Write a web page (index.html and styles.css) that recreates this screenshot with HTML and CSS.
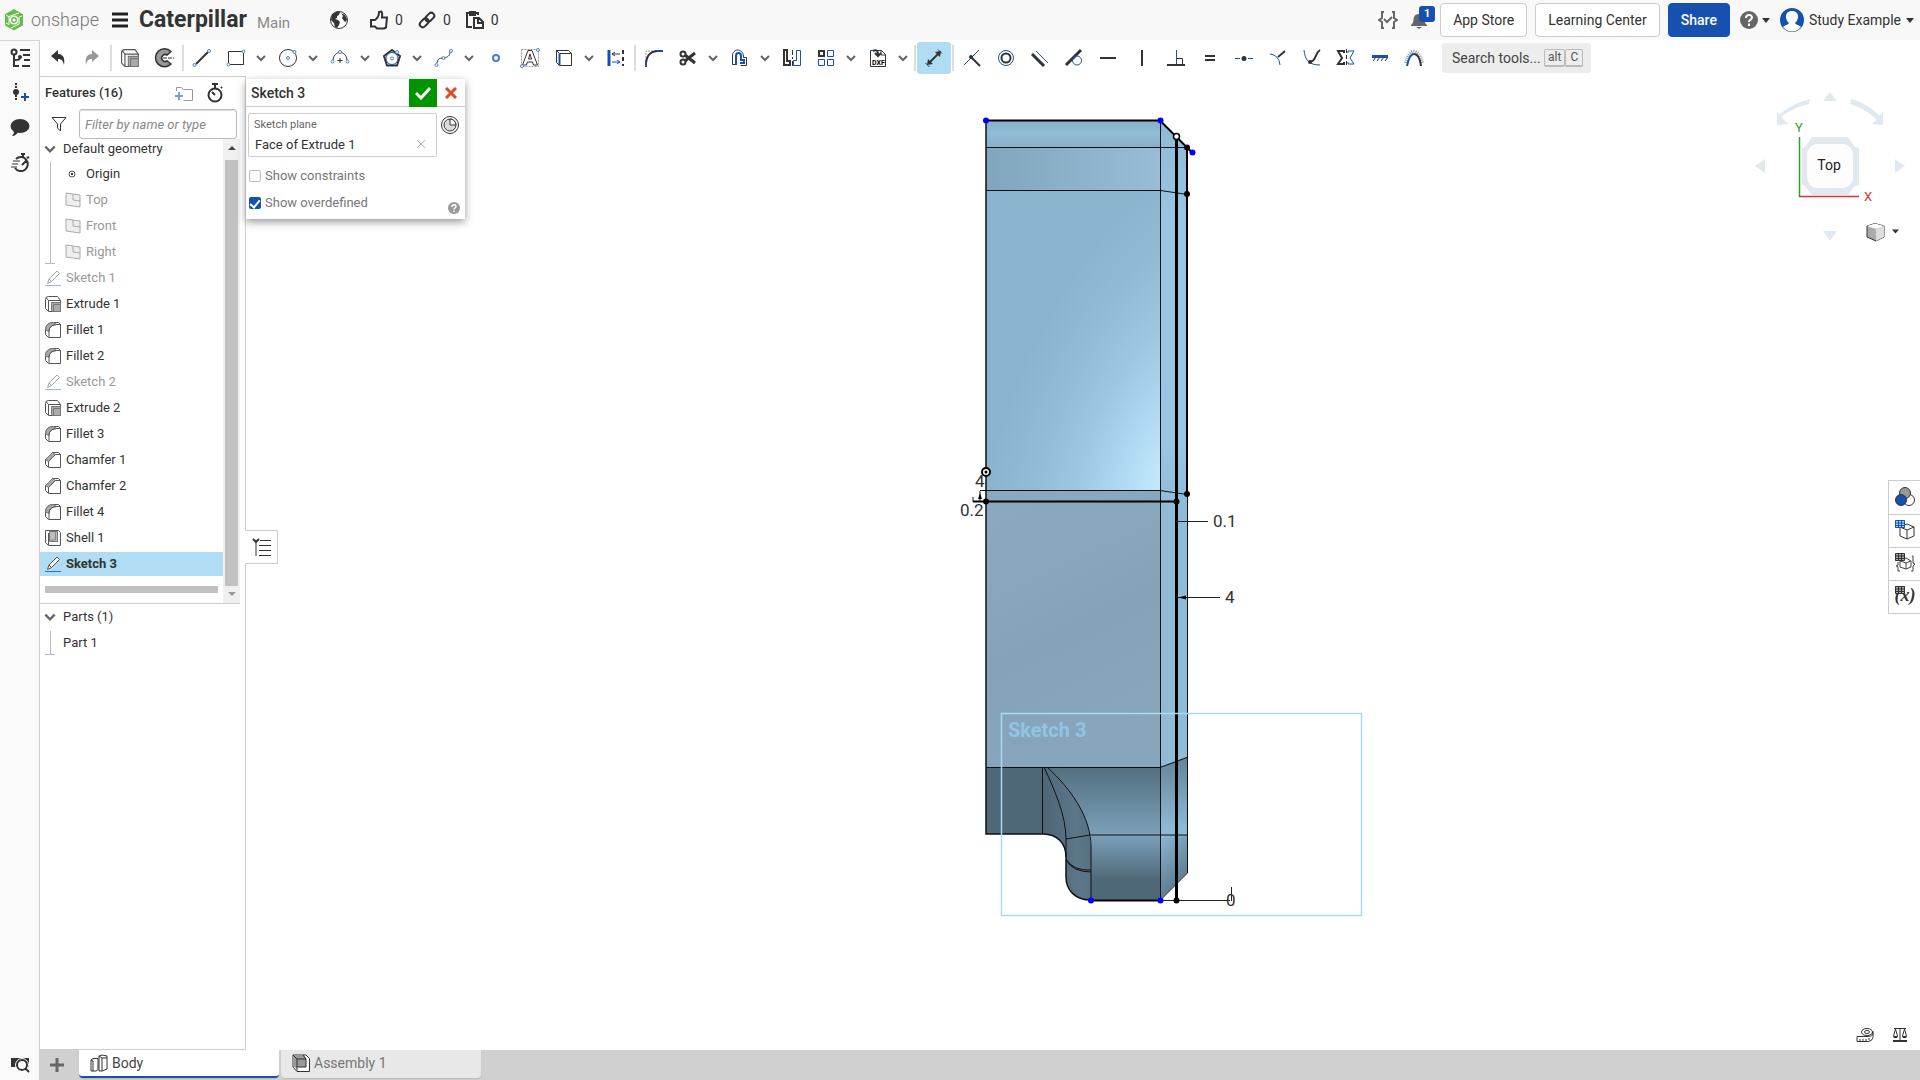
FILE: index.html
```html
<!DOCTYPE html>
<html lang="en">
<head>
<meta charset="utf-8">
<title>Caterpillar | Body</title>
<link rel="stylesheet" href="styles.css">
</head>
<body>
<svg class="defs" aria-hidden="true">
  <symbol id="caret" viewBox="0 0 12 12"><path d="M2 4l4 4 4-4" fill="none" stroke="#666" stroke-width="2"/></symbol>
  <symbol id="down" viewBox="0 0 8 5"><path d="M0 0h8L4 5z" fill="#333"/></symbol>
  <symbol id="plane" viewBox="0 0 16 16"><path d="M1 1l14 2v12L1 13z" fill="#eee" stroke="#aaa"/><path d="M8 2v6l7 1" fill="none" stroke="#aaa"/></symbol>
  <symbol id="pencil" viewBox="0 0 16 16"><path d="M2.500 13.500l1.500-4.500 8-8 2.500 2.500-8 8zM4 9l2.500 2.500" fill="#fff" stroke="#555"/><path d="M0 15.500h16" stroke="#2f6fd0"/></symbol>
  <symbol id="extrude" viewBox="0 0 16 16"><path d="M.5 3.500v9l3 3h12v-11l-3-4h-9q-3 0-3 3z" fill="#fff" stroke="#555"/><path d="M3.500 15V4.500h12M1 1.500l2.500 3" fill="none" stroke="#555"/><path d="M6.500 6.500h9v9h-8l-1-1z" fill="#aaa" stroke="#777"/><path d="M8.500 15V8.500h7" fill="none" stroke="#777"/></symbol>
  <symbol id="fillet" viewBox="0 0 16 16"><path d="M.5 7.500Q1 .5 8.500.5h5l2 2v13h-12l-3-3z" fill="#fff" stroke="#555"/><path d="M.5 8Q1 .5 8.500.5l3 2Q4 3 4 9.500z" fill="#aaa" stroke="#777"/><path d="M4 15V9.500Q4 3 11.500 2.500h4" fill="none" stroke="#555"/></symbol>
  <symbol id="chamfer" viewBox="0 0 16 16"><path d="M.5 7.500L7.500.5h6l2 2v13h-12l-3-3z" fill="#fff" stroke="#555"/><path d="M.5 7.500L7.500.5l3 2L3.500 9.500z" fill="#aaa" stroke="#777"/><path d="M3.500 15V9.500l7-7h5" fill="none" stroke="#555"/></symbol>
  <symbol id="hollow" viewBox="0 0 16 16"><path d="M.5.5h13l2 2v13h-12l-3-3zM3.500 3v12" fill="#fff" stroke="#555"/><path d="M4.500 1.500h8v10h-8z" fill="#bbb" stroke="#777"/><path d="M10.500 2v8h-6" fill="none" stroke="#888"/></symbol>
  <symbol id="grid" viewBox="0 0 10 8"><path d="M.5.5h9v7h-9zM.5 3h9M.5 5.500h9M3.500 1v6M6.500 1v6" stroke="currentColor" fill="none"/></symbol>
</svg>

<header class="topbar">
  <a class="logo" href="#">
    <svg width="20" height="24" viewBox="0 0 20 24"><path d="M10 1l9 5.300v11L10 22.500 1 17.500V6.300z" fill="#66bd4f"/><path d="M2 15l3 1.700V8.500L15 5M18 8l-3 1v7l-8 4M5 9L2 7" fill="none" stroke="#f8f8f8"/><circle cx="10" cy="12" r="4.600" fill="#f8f8f8"/><circle cx="10" cy="12" r="3" fill="#66bd4f"/><circle cx="10" cy="12" r="1.600" fill="#f8f8f8"/></svg>
    <span>onshape</span>
  </a>
  <button class="bare menu" aria-label="Menu"><svg width="16" height="16"><path d="M0 2h16M0 8h16M0 14h16" stroke="#222" stroke-width="3"/></svg></button>
  <h1>Caterpillar</h1>
  <span class="branch">Main</span>
  <div class="counts">
    <svg class="globe" width="20" height="20"><circle cx="10" cy="10" r="8.500" fill="#fff" stroke="#333"/><path d="M3 4l5-2.500 3 .5-1 3-2 1v2L6 9l3 1 2 2-1 3-2 3-2-1-1-4-3-3zM12 3l4 2 2 4-1 3-2-1-2-3 1-2z" fill="#333"/></svg>
    <span><svg width="20" height="20" fill="none" stroke="#333" stroke-width="2"><path d="M2 10h4c3-2 4-4 4-8l2-.5c2 1 1 4 1 6h5l-1 10-2 1H8l-2-2H2z"/></svg>0</span>
    <span><svg width="20" height="20" viewBox="0 0 20 20" fill="none" stroke="#333" stroke-width="2"><g transform="rotate(-45 10 10)"><rect x="1" y="7" width="10" height="6" rx="3"/><rect x="9" y="7" width="10" height="6" rx="3"/></g></svg>0</span>
    <span><svg width="20" height="20" fill="none" stroke="#333" stroke-width="2"><path d="M7 17H2V3h11v2M5 2v3h5V2z"/><path d="M9 8h5l4 4v6H9zM13 8v5h5"/></svg>0</span>
  </div>
  <div class="account">
    <button class="bare" aria-label="Tasks"><svg width="20" height="20" fill="none" stroke="#666" stroke-width="2"><path d="M6 2H4v6l-3 2 3 2v6h2M14 2h2v6l3 2-3 2v6h-2M6 9l3 3 5-5"/></svg></button>
    <button class="bare bell" aria-label="Notifications"><svg width="18" height="20"><path d="M1 15c3-2 2-5 3-8 1-4 9-4 10 0 1 3 0 6 3 8v1H1zM6 17h6l-3 2z" fill="#666"/></svg><b>1</b></button>
    <button class="btn">App Store</button>
    <button class="btn">Learning Center</button>
    <button class="btn share">Share</button>
    <button class="bare help" aria-label="Help"><svg width="18" height="18"><circle cx="9" cy="9" r="9" fill="#666"/><path d="M6 7c0-4 6-4 6-.5C12 8.500 9 8.500 9 11M9 12.500V15" stroke="#fff" stroke-width="2" fill="none"/></svg><svg width="8" height="5"><use href="#down"/></svg></button>
    <button class="bare user"><svg width="24" height="24"><circle cx="12" cy="12" r="12" fill="#1651b0"/><path d="M12 3c8 0 7 9 3 12 1 2 4 2 6 4-5 6-13 6-18 0 2-2 5-2 6-4C5 12 4 3 12 3z" fill="#fff"/></svg>Study Example<svg width="8" height="5"><use href="#down"/></svg></button>
  </div>
</header>

<div class="shell">
  <nav class="rail" aria-label="Document panels">
    <button class="bare" aria-label="Feature tree"><svg width="20" height="20" fill="none" stroke="#333" stroke-width="2"><circle cx="4" cy="4" r="2.500"/><path d="M4 7v11h5M4 12c5 0 6 0 6-3M10 2h10M13 7h7M14 12h6M12 18h8"/><circle cx="10" cy="9" r="1"/></svg></button>
    <button class="bare" aria-label="Insert"><svg width="20" height="20"><circle cx="6" cy="9" r="3" fill="#333"/><path d="M6 0v6M6 12v6" stroke="#333" stroke-width="2" stroke-dasharray="2 1"/><path d="M11 14h8M15 10v8" stroke="#1651b0" stroke-width="2"/></svg></button>
    <button class="bare" aria-label="Comments"><svg width="20" height="20"><ellipse cx="10" cy="8" rx="9.500" ry="7" fill="#333"/><path d="M3 12l1 3-2 3c3 0 5-2 6-4z" fill="#333"/></svg></button>
    <button class="bare" aria-label="History"><svg width="20" height="20" fill="none" stroke="#333" stroke-width="2"><path d="M6 6a7 7 0 1 1-1 9M11 1h4M13 1v3M17 5l2-1M12 12l4-4"/><path d="M3 8h7M2 11h6M1 14h6" stroke-width="1"/></svg></button>
    <button class="bare last" aria-label="Search document"><svg width="20" height="20"><path d="M1 3h18v9H1z" fill="#333"/><circle cx="12" cy="10" r="5" fill="#fafafa" stroke="#333" stroke-width="2"/><circle cx="12" cy="10" r="6.500" fill="none" stroke="#fafafa"/><path d="M15 13l4 4" stroke="#333" stroke-width="2"/></svg></button>
  </nav>

  <div class="work">
    <div class="toolbar" role="toolbar" aria-label="Sketch tools">
      <button class="tool" aria-label="Undo"><svg><path d="M3 8l7-6v4c6 0 7 5 6 11-1-4-2-6-6-6v3z" fill="#333"/></svg></button>
      <button class="tool" aria-label="Redo"><svg><path d="M17 8l-7-6v4c-6 0-7 5-6 11 1-4 2-6 6-6v3z" fill="#999"/></svg></button>
      <i class="sep"></i>
      <button class="tool" aria-label="Extrude"><svg><use href="#extrude" x="1" y="1" width="18" height="18"/></svg></button>
      <button class="tool" aria-label="Revolve"><svg><path d="M17 3.500A9 9 0 1 0 17 16l-4-3a3.500 3.500 0 1 1 0-6z" fill="#999" stroke="#333" stroke-width="1.500"/><path d="M9 10h11" stroke="#333" stroke-dasharray="4 1"/></svg></button>
      <i class="sep"></i>
      <button class="tool" aria-label="Line"><svg><path d="M4 16L16 4" class="k w"/><circle class="n" cx="2.500" cy="17" r="1.500"/><circle class="n" cx="17" cy="3" r="1.500"/></svg></button>
      <button class="tool" aria-label="Rectangle"><svg><path d="M2.500 3.500h15v13h-15z" class="k"/><circle class="n" cx="2.500" cy="16.500" r="1.500"/><circle class="n" cx="17.500" cy="3.500" r="1.500"/></svg></button><button class="drop" aria-label="Rectangle options"><svg><use href="#caret"/></svg></button>
      <button class="tool" aria-label="Circle"><svg><circle cx="10" cy="10" r="8.500" class="k"/><circle class="n" cx="10" cy="10" r="1.500"/><circle class="n" cx="16.500" cy="4" r="1.500"/></svg></button><button class="drop" aria-label="Circle options"><svg><use href="#caret"/></svg></button>
      <button class="tool" aria-label="Arc"><svg><path d="M3 12C4 2 16 2 17 12" class="k"/><path d="M10 10v5M7.500 12.500h5" class="k"/><circle class="n" cx="2.500" cy="13.500" r="1.500"/><circle class="n" cx="17.500" cy="13.500" r="1.500"/><circle class="n" cx="10" cy="4" r="1.500"/></svg></button><button class="drop" aria-label="Arc options"><svg><use href="#caret"/></svg></button>
      <button class="tool" aria-label="Polygon"><svg><path d="M10 2l8 6-3 9.500H5L2 8z" class="k w"/><circle class="b" cx="10" cy="10.500" r="6"/><circle class="n" cx="10" cy="10.500" r="1.500"/><circle class="n" cx="15" cy="4" r="1.500"/></svg></button><button class="drop" aria-label="Polygon options"><svg><use href="#caret"/></svg></button>
      <button class="tool" aria-label="Spline"><svg><path d="M3 15c1-7 6-4 8-5s5-2 5-6" class="k"/><circle class="n" cx="2.500" cy="17" r="1.500"/><circle class="n" cx="9.500" cy="10" r="1.500"/><circle class="n" cx="17" cy="3" r="1.500"/></svg></button><button class="drop" aria-label="Spline options"><svg><use href="#caret"/></svg></button>
      <button class="tool" aria-label="Point"><svg><circle class="n" stroke-width="2" cx="10" cy="10" r="3"/></svg></button>
      <button class="tool" aria-label="Text"><svg><path d="M1.500 1.500h17v17h-17z" class="g" stroke-dasharray="2 1"/><path d="M2.500 17L8 2.500h4L17.500 17h-4l-1-3h-5l-1 3zM8.500 11h3L10 6z" fill="#fff" stroke="#333"/><circle class="n" cx="2" cy="18" r="1.500"/><circle class="n" cx="18" cy="2" r="1.500"/></svg></button>
      <button class="tool" aria-label="Use"><svg><path d="M2.500 2.500h12l3 3v12h-12l-3-3zM2.500 2.500l3 3h12" class="k"/><path d="M5.500 5.500v12" class="b w"/></svg></button><button class="drop" aria-label="Use options"><svg><use href="#caret"/></svg></button>
      <button class="tool" aria-label="Construction"><svg><path d="M3 2v16" class="b w3"/><path d="M17 2v16" class="k w" stroke-dasharray="4 3"/><path d="M14 6H6l3-2M6 6l3 2" class="k"/><path d="M6 14h8l-3-2M14 14l-3 2" class="b"/></svg></button>
      <i class="sep"></i>
      <button class="tool" aria-label="Sketch fillet"><svg><path d="M2 13V3h10" class="g" stroke-dasharray="2 1"/><path d="M2 15C3 7 6 4 13 3" class="k w"/><path d="M2 14v5M13 3h6" class="b w"/></svg></button>
      <button class="tool" aria-label="Trim"><svg><circle cx="5" cy="6" r="2.500" class="k w"/><circle cx="5" cy="14" r="2.500" class="k w"/><path d="M7 7l10 8M7 13l10-8" class="k w3"/></svg></button><button class="drop" aria-label="Trim options"><svg><use href="#caret"/></svg></button>
      <button class="tool" aria-label="Offset"><svg><path d="M2.500 16.500V8c0-8 10-8 11 0v1.500h3v8h-6M2.500 16.500H5" class="k"/><path d="M6 17V8c0-4 5-4 5 0v4h3v3h-4" class="b w"/></svg></button><button class="drop" aria-label="Offset options"><svg><use href="#caret"/></svg></button>
      <button class="tool" aria-label="Mirror"><svg><path d="M2 2h3v11h3v4H2z" class="k w"/><path d="M18.500 2.500h-4v10h-3v5h7z" class="b"/><path d="M10.500 2v16" class="k" stroke-dasharray="5 2 2 2"/></svg></button>
      <button class="tool" aria-label="Pattern"><svg><path d="M3 3h5v5H3z" class="k w"/><path d="M11.500 2.500h6v6h-6zM2.500 11.500h6v6h-6zM11.500 11.500h6v6h-6z" class="b"/></svg></button><button class="drop" aria-label="Pattern options"><svg><use href="#caret"/></svg></button>
      <button class="tool" aria-label="Insert DXF"><svg><path d="M2.500 18.500v-16h11l4 4v12zM13 2v5h5" class="k"/><path d="M5 3c4-2 5 0 5 4M7 5l3 3 3-3" class="k w"/><text x="4" y="17" class="dxf">DXF</text></svg></button><button class="drop" aria-label="Insert options"><svg><use href="#caret"/></svg></button>
      <i class="sep"></i>
      <button class="tool on" aria-label="Dimension" aria-pressed="true"><svg><path d="M6 14l8-8" class="k w"/><path d="M3 17l1-6 5 5zM17 3l-1 6-5-5z" fill="#333"/><path d="M1.500 15l4 4M14 1.500l4 4" class="k"/></svg></button>
      <i class="sep"></i>
      <button class="tool" aria-label="Coincident"><svg><path d="M2 17L17 2" class="b"/><path d="M9 9l9 9" class="k w"/><circle cx="9" cy="9" r="2" fill="#333"/></svg></button>
      <button class="tool" aria-label="Concentric"><svg><circle cx="10" cy="10" r="7.500" class="b"/><circle cx="10" cy="10" r="4.500" class="k w"/></svg></button>
      <button class="tool" aria-label="Parallel"><svg><path d="M2 6l12 12" class="k w3"/><path d="M6 3l12 12" class="b"/></svg></button>
      <button class="tool" aria-label="Tangent"><svg><path d="M2 17L17 2" class="k w3"/><circle cx="13" cy="12.500" r="4.500" class="b"/></svg></button>
      <button class="tool" aria-label="Horizontal"><svg><path d="M2 10h16" class="k w"/></svg></button>
      <button class="tool" aria-label="Vertical"><svg><path d="M10 2v16" class="k w"/></svg></button>
      <button class="tool" aria-label="Perpendicular"><svg><path d="M10.500 2v15" class="b"/><path d="M1 17h18" class="k w"/><path d="M10.500 10.500h6V17" class="k"/></svg></button>
      <button class="tool" aria-label="Equal"><svg><path d="M5 8h10M5 12h10" class="k w"/></svg></button>
      <button class="tool" aria-label="Midpoint"><svg><path d="M1 10.500h5M14 10.500h5" class="b"/><circle cx="10" cy="10.500" r="2.500" fill="#333"/></svg></button>
      <button class="tool" aria-label="Normal"><svg><path d="M2 6q9 1 10 11" class="b"/><path d="M10 9l7-6" class="k w"/></svg></button>
      <button class="tool" aria-label="Pierce"><svg><path d="M2 2c1 10 5 15 16 15" class="b"/><path d="M8 14c7-1 4-8 10-12" class="k w"/><circle cx="8" cy="14" r="2" fill="#333"/></svg></button>
      <button class="tool" aria-label="Symmetric"><svg><path d="M8 5V3H2l4 7-4 6h6v-2" class="k w"/><path d="M12 5V3h6l-4 7 4 6h-6v-2" class="b"/><path d="M10.500 1v18" class="k" stroke-dasharray="4 2"/></svg></button>
      <button class="tool" aria-label="Fix"><svg><path d="M2 8.500h16" class="b w3"/><path d="M3 13l3-4M7 13l3-4M11 13l3-4M15 13l3-4" class="k"/></svg></button>
      <button class="tool" aria-label="Curvature"><svg><path d="M2 15C6 0 14 0 18 15" class="g" stroke-width="4" stroke-dasharray="1 1"/><path d="M3 18C5 8 8 6 10 6" class="b w"/><path d="M10 6c3 0 6 4 7 12" class="k w"/></svg></button>
      <button class="search">Search tools... <kbd>alt</kbd><kbd>C</kbd></button>
    </div>

    <div class="stage">
      <aside class="features">
        <div class="head"><h2>Features (16)</h2>
          <button class="bare" aria-label="Add folder"><svg width="20" height="18"><path d="M2.500 7V3.500h5l2 2h9v11h-9" fill="none" stroke="#999"/><path d="M1 12h8M5 8v8" stroke="#78a0dc" stroke-width="2"/></svg></button>
          <button class="bare" aria-label="Rebuild times"><svg width="18" height="20" fill="none" stroke="#333" stroke-width="2"><circle cx="9" cy="12" r="6.500"/><path d="M6 1h6M9 1v4M15 5l1-1M9 12L6 9"/></svg></button>
        </div>
        <div class="filter"><svg width="16" height="16"><path d="M1 1.500h14L9.500 8v7L6.500 12V8z" fill="none" stroke="#333"/></svg><input type="text" aria-label="Filter features" placeholder="Filter by name or type"></div>
        <div class="tree">
          <ul>
            <li class="group first"><svg><use href="#caret"/></svg>Default geometry</li>
            <li class="nest"><ul>
              <li><svg><circle cx="7" cy="8" r="3" fill="none" stroke="#555"/><circle cx="7" cy="8" r="1"/></svg>Origin</li>
              <li class="off"><svg><use href="#plane"/></svg>Top</li>
              <li class="off"><svg><use href="#plane"/></svg>Front</li>
              <li class="off"><svg><use href="#plane"/></svg>Right</li>
            </ul></li>
            <li class="off dim"><svg><use href="#pencil"/></svg>Sketch 1</li>
            <li><svg><use href="#extrude"/></svg>Extrude 1</li>
            <li><svg><use href="#fillet"/></svg>Fillet 1</li>
            <li><svg><use href="#fillet"/></svg>Fillet 2</li>
            <li class="off dim"><svg><use href="#pencil"/></svg>Sketch 2</li>
            <li><svg><use href="#extrude"/></svg>Extrude 2</li>
            <li><svg><use href="#fillet"/></svg>Fillet 3</li>
            <li><svg><use href="#chamfer"/></svg>Chamfer 1</li>
            <li><svg><use href="#chamfer"/></svg>Chamfer 2</li>
            <li><svg><use href="#fillet"/></svg>Fillet 4</li>
            <li><svg><use href="#hollow"/></svg>Shell 1</li>
            <li class="current"><svg><use href="#pencil"/></svg>Sketch 3</li>
            <li class="rollback"></li>
          </ul>
          <div class="scroll"><svg width="8" height="4"><path d="M0 4h8L4 0z" fill="#444"/></svg><i></i><svg width="8" height="4"><path d="M0 0h8L4 4z" fill="#999"/></svg></div>
        </div>
        <ul class="parts">
          <li class="group"><svg><use href="#caret"/></svg>Parts (1)</li>
          <li class="nest"><ul><li class="part">Part 1</li></ul></li>
        </ul>
      </aside>

      <main class="canvas">
        <svg class="model" viewBox="246 76 1674 974" aria-label="Caterpillar model, top view">
          <defs>
            <radialGradient id="face" gradientUnits="userSpaceOnUse" cx="1170" cy="480" r="360" gradientTransform="translate(1170 480) rotate(18) scale(.5 1) translate(-1170 -480)"><stop offset="0" stop-color="#c6edff"/><stop offset=".25" stop-color="#b0daf3"/><stop offset=".5" stop-color="#9bc7e1"/><stop offset=".75" stop-color="#90bbd5"/><stop offset="1" stop-color="#8ab4ce"/></radialGradient>
            <linearGradient id="band"><stop offset="0" stop-color="#81a5bd"/><stop offset="1" stop-color="#9abdd7"/></linearGradient>
            <linearGradient id="cap" x2="0" y2="1"><stop offset="0" stop-color="#86b1ca"/><stop offset=".5" stop-color="#8fbdd6"/><stop offset="1" stop-color="#88b0ca"/></linearGradient>
            <linearGradient id="low" x2=".3" y2="1"><stop offset="0" stop-color="#8baac0"/><stop offset=".6" stop-color="#85a3b8"/><stop offset="1" stop-color="#88a6bb"/></linearGradient>
            <linearGradient id="side" x2="0" y2="1"><stop offset="0" stop-color="#8fbad5"/><stop offset=".15" stop-color="#98c6e2"/><stop offset=".5" stop-color="#98c6e2"/><stop offset=".6" stop-color="#8fbbd7"/><stop offset="1" stop-color="#8fbbd7"/></linearGradient>
            <linearGradient id="hip" x2="0" y2="1"><stop offset="0" stop-color="#536f80"/><stop offset="1" stop-color="#7aa0b8"/></linearGradient>
            <linearGradient id="foot" x2="0" y2="1"><stop offset="0" stop-color="#7aa0b8"/><stop offset=".7" stop-color="#4f6878"/><stop offset="1" stop-color="#4f6878"/></linearGradient>
            <linearGradient id="hipside" x2="0" y2="1"><stop offset="0" stop-color="#658395"/><stop offset=".9" stop-color="#8cb9d4"/></linearGradient>
            <linearGradient id="footside" x2=".4" y2="1"><stop offset="0" stop-color="#8cb9d4"/><stop offset="1" stop-color="#587587"/></linearGradient>
            <linearGradient id="curl" y1=".2" y2="0"><stop offset="0" stop-color="#4d6676"/><stop offset=".6" stop-color="#5b7789"/><stop offset="1" stop-color="#53707f"/></linearGradient>
          </defs>
          <path d="M1160 120l27 27v620h-27z" fill="url(#side)"/>
          <path d="M986 120h174v27H986z" fill="url(#cap)"/>
          <path d="M986 147h174v44H986z" fill="url(#band)"/>
          <path d="M986 191h174v299H986z" fill="url(#face)"/>
          <path d="M986 490h174v277H986z" fill="url(#low)"/>
          <path d="M986 767h57v67h-57z" fill="#4f6878"/>
          <path d="M1047 767h113v68h-94z" fill="url(#hip)"/>
          <path d="M1043 767h4c24 22 44 50 44 80v53c-16 0-25-10-25-23v-20c0-14-9-23-23-23z" fill="url(#curl)"/>
          <path d="M1091 835h69v65h-69z" fill="url(#foot)"/>
          <path d="M1160 767l27-10v78h-27z" fill="url(#hipside)"/>
          <path d="M1160 835h27v38l-27 27z" fill="url(#footside)"/>
          <g fill="none" stroke="#111">
            <path d="M986.500 147.500h201M986.500 190.500h174l27 4M980 490.500h180l27 4M1160.500 120v780M986 767.500h174l27-10M1042.500 767v67M1066 839l24-4h97"/>
            <path d="M1044 767c10 22 22 48 22 72v18M1047 767c24 22 44 50 44 80v53M1066 859q7 12 25 11M1066 860q7 12 25 12M1187.500 194v679l-27 27"/>
            <path d="M986 120v714h57c14 0 23 9 23 23v20c0 13 9 23 25 23" stroke-width="1.500"/>
            <path d="M986 120.500h174l32 32M1187 147v347M973 501.500h203M1091 900.500h69" stroke="#000" stroke-width="2"/>
            <path d="M1176.500 137v763" stroke="#000" stroke-width="3"/>
            <path d="M973 497v5M980 491v10M1176 521.500h32M1176 597.500h44M1160 900.500h70M1231.500 887v14" stroke="#222"/>
          </g>
          <path d="M978 499l2-6 2 6zM1178 597.500l8-2v4z"/>
          <g fill="#00f"><circle cx="986" cy="120.500" r="3"/><circle cx="1160.500" cy="120.500" r="3"/><circle cx="1192.500" cy="152.500" r="3"/><circle cx="1091" cy="900.500" r="3"/><circle cx="1160.500" cy="900.500" r="3"/></g>
          <g><circle cx="1187" cy="147.500" r="3"/><circle cx="1187" cy="194" r="3"/><circle cx="1187" cy="494" r="3"/><circle cx="986" cy="501.500" r="3"/><circle cx="1176.500" cy="501.500" r="3"/><circle cx="1176.500" cy="900.500" r="3"/></g>
          <circle cx="1176.500" cy="136.500" r="3" fill="#fff" stroke="#000" stroke-width="1.500"/>
          <circle cx="986" cy="472" r="4" fill="#fff" stroke="#000" stroke-width="2"/><circle cx="986" cy="472" r="1.500"/>
          <g class="dims"><text x="975" y="487">4</text><text x="960" y="516">0.2</text><text x="1213" y="527">0.1</text><text x="1225" y="603">4</text><text x="1226" y="906">0</text></g>
          <path d="M1001.500 713.500h360v202h-360z" fill="none" stroke="#a9daf3" stroke-width="1.500"/>
          <text x="1008" y="737" class="plane">Sketch 3</text>
        </svg>

        <form class="dialog">
          <header><h2>Sketch 3</h2><button type="button" class="ok" aria-label="Accept"><svg width="16" height="14"><path d="M1 7l5 5 9-10" fill="none" stroke="#fff" stroke-width="3"/></svg></button><button type="button" class="bare no" aria-label="Cancel"><svg width="12" height="12"><path d="M1 1l10 10M11 1L1 11" stroke="#dc4a20" stroke-width="3"/></svg></button></header>
          <div class="pick">
            <div class="field"><label for="plane-input">Sketch plane</label><div><input id="plane-input" value="Face of Extrude 1"><button type="button" class="bare" aria-label="Clear"><svg width="8" height="8"><path d="M0 0l8 8M8 0L0 8" stroke="#aaa"/></svg></button></div></div>
            <button type="button" class="bare" aria-label="Final"><svg width="18" height="18" fill="none" stroke="#333"><circle cx="9" cy="9" r="8.500"/><circle cx="9" cy="9" r="6" fill="#ddd"/><path d="M9 3v6h6A6 6 0 0 0 9 3" fill="#fff"/></svg></button>
          </div>
          <label class="check"><input type="checkbox">Show constraints</label>
          <div class="lastrow"><label class="check"><input type="checkbox" checked>Show overdefined</label>
          <button type="button" class="bare" aria-label="Help"><svg width="12" height="12"><circle cx="6" cy="6" r="6" fill="#999"/><path d="M4 5c0-3 4-3 4-.5C8 6 6 6 6 7.500M6 8.500V10" stroke="#fff" fill="none" stroke-width="1.500"/></svg></button></div>
        </form>

        <button class="fly" aria-label="Toggle feature list"><svg width="20" height="20" fill="none" stroke="#333"><path d="M1 2l3 3 3-3" stroke-width="2"/><path d="M8 3.500h11M7 8.500h12M7 13.500h12M7 18.500h12"/><path d="M4 6v13" stroke="#999" stroke-width="2"/></svg></button>

        <svg class="cube" width="156" height="156" viewBox="1752 90 156 156">
          <g fill="#e1e9f0"><path d="M1823 101h14l-7-9zM1823 231h14l-7 10zM1755 166l10-7v14zM1905 166l-10-7v14z"/><path d="M1802 148l3-1 7-10h36l7 10 4 1v37l-4 1-7 9h-36l-7-9-3-1z"/><path d="M1777 113l4 4c8-6 16-10 28-13l1-5c-12 3-22 8-30 15zM1777 112v13l11-1zM1883 112v13l-11-1z"/><path d="M1880 116l-3 4c-8-8-16-13-27-16l1-5c12 3 22 10 29 17z"/></g>
          <rect x="1807" y="144" width="46" height="44" rx="11" fill="#fdfdfd"/>
          <path d="M1799.500 137v60" stroke="#28a428" stroke-width="1.500"/><path d="M1799 196.500h60" stroke="#e03030" stroke-width="1.500"/>
          <text x="1829" y="170" class="face">Top</text><text x="1799" y="132" class="ay">Y</text><text x="1868" y="201" class="ax">X</text>
          <path d="M1867 226l8-2.500 9 2.500v11l-8 4-9-4z" fill="#aaa" stroke="#333"/><path d="M1867 226l8-2.500 9 2.500-8 3z" fill="#fff"/><path d="M1876 229l8-3v11l-8 4z" fill="#ddd"/><path d="M1892 229.500h7l-3.500 4z" fill="#333"/>
        </svg>

        <div class="dock">
          <button aria-label="Appearance"><svg width="20" height="20" stroke="#333"><circle cx="14" cy="13" r="5.500" fill="#fff"/><circle cx="10" cy="6" r="5.500" fill="#999"/><circle cx="6" cy="13" r="5.500" fill="#1651b0"/></svg></button>
          <button aria-label="Configurations"><svg width="20" height="20"><path d="M5 7l7-3 7 3v9l-7 3-7-3zM5 7l7 3 7-3M12 10v9" fill="#fff" stroke="#333"/><path d="M0 0h10v8H0z" fill="#a9d0f5"/><g color="#1651b0"><use href="#grid" width="10" height="8"/></g></svg></button>
          <button aria-label="Custom features"><svg width="20" height="20"><path d="M5 8l6-3 5 3v6l-5 2-6-2zM5 8l6 2 5-2M11 10v6M3 9v3l-2 1 2 1v4h2M17 3h1v7l2 1-2 2v5h-2" fill="none" stroke="#444"/><path d="M0 0h10v8H0z" fill="#aaa"/><g color="#333"><use href="#grid" width="10" height="8"/></g></svg></button>
          <button aria-label="Variables"><svg width="20" height="20"><text x="10" y="15" class="var">(x)</text><path d="M0 0h10v7H0z" fill="#aaa"/><g color="#333"><use href="#grid" width="10" height="8"/></g></svg></button>
        </div>

        <div class="measure">
          <button class="bare" aria-label="Measure"><svg width="18" height="16" fill="none" stroke="#333"><path d="M1 14.500v-5h9c6 0 7-1 7-5v6q-1 4-5 4z"/><ellipse cx="11" cy="5" rx="5.500" ry="3.500"/><ellipse cx="11" cy="5" rx="2.500" ry="1.500"/><path d="M4 14v-2M7 14v-2M10 14v-2M13 13v-2"/></svg></button>
          <button class="bare" aria-label="Mass properties"><svg width="16" height="16" fill="none" stroke="#333"><path d="M2 1.500h12M8 1v12M3.500 2L1.500 9M3.500 2l2 7M12.500 2l-2 7M12.500 2l2 7"/><path d="M1 9h5L5 11H2zM10 9h5l-1 2h-3z" fill="#333" stroke="none"/><path d="M1 14h14" stroke-width="2"/></svg></button>
        </div>
      </main>
    </div>

    <footer class="tabs">
      <button class="bare plus" aria-label="Insert tab"><svg width="16" height="16"><path d="M8 1v14M1 8h14" stroke="#666" stroke-width="3"/></svg></button>
      <button class="tab active"><svg width="18" height="18" fill="#fff" stroke="#333"><path d="M1 6l2-1.500h5v11L6 17H1zM1 6l2 1v10M9 2l3-1 5 1v13l-5 2H9zM9 2l3 2h5M12 4v13"/></svg>Body</button>
      <button class="tab"><svg width="18" height="18"><path d="M1 1h13l3.500 3.500v13H5L1 13z" fill="#fff" stroke="#333"/><path d="M1 1h10l3 3v9H5v2l-4-3z" fill="#999"/><path d="M1 1l4 4v12M5 5h9v8H5M11 1l3 4" fill="none" stroke="#333"/></svg>Assembly 1</button>
    </footer>
  </div>
</div>
</body>
</html>
```
FILE: styles.css
```css
* { box-sizing: border-box; }
html, body { height: 100%; }
body { margin: 0; display: flex; flex-direction: column; font: 14px/20px Roboto, "Liberation Sans", sans-serif; color: #333; background: #fff; overflow: hidden; }
ul { list-style: none; margin: 0; padding: 0; }
h1, h2 { margin: 0; }
button, input { font: inherit; color: inherit; }
button { cursor: pointer; padding: 0; border: 0; }
svg { flex: none; }
.defs { position: absolute; width: 0; height: 0; }
.bare { display: flex; align-items: center; justify-content: center; background: none; }

/* Top bar */
.topbar { display: flex; align-items: center; height: 40px; flex: none; background: #f8f8f8; padding: 0 6px 0 4px; }
.logo { display: flex; align-items: center; gap: 7px; text-decoration: none; color: #777; font-size: 18px; font-weight: 300; }
.menu { margin: 0 11px 0 13px; }
h1 { font-size: 23px; line-height: 32px; font-weight: 700; }
.branch { margin: 6px 0 0 10px; font-size: 15px; color: #888; }
.counts { display: flex; align-items: center; margin-left: 39px; gap: 14px; }
.counts span { display: flex; align-items: center; gap: 6px; }
.globe { margin-right: 6px; }
.account { margin-left: auto; display: flex; align-items: center; gap: 8px; }
.bell { position: relative; margin: 0 4px; }
.bell b { position: absolute; left: 9px; top: -4px; width: 16px; height: 16px; border-radius: 3px; background: #1651b0; color: #fff; font-size: 11px; line-height: 16px; }
.btn { height: 34px; padding: 0 12px; border: 1px solid #ccc; border-radius: 4px; background: #fff; }
.account .btn { min-width: 62px; }
.btn.share { background: #1651b0; border-color: #1651b0; color: #fff; font-weight: 500; }
.help { gap: 4px; margin-left: 2px; }
.user { gap: 5px; margin-left: 2px; }

/* Main grid */
.shell { flex: 1; min-height: 0; display: flex; }
.rail { flex: none; width: 40px; display: flex; flex-direction: column; align-items: center; gap: 15px; padding: 7px 0 5px; background: #fafafa; border-right: 1px solid #d0d0d0; border-top: 1px solid #d8d8d8; }
.rail .last { margin-top: auto; }
.work { flex: 1; min-width: 0; display: flex; flex-direction: column; }

/* Toolbar */
.toolbar { display: flex; align-items: center; flex: none; height: 36px; padding-left: 1px; }
.tool { width: 34px; height: 32px; display: grid; place-items: center; background: none; border-radius: 3px; }
.tool svg { width: 20px; height: 20px; overflow: visible; }
.tool.on { background: #b0ddf4; }
.drop { width: 18px; height: 32px; display: flex; align-items: center; background: none; padding-left: 2px; }
.drop svg { width: 12px; height: 12px; }
.sep { width: 2px; height: 26px; margin: 0 1px; background: #ddd; }
.k, .b, .g, .n { fill: none; stroke: #333; }
.b { stroke: #1651b0; }
.g { stroke: #999; }
.n { fill: #fff; stroke: #4a7fd0; }
.w { stroke-width: 2px; }
.w3 { stroke-width: 3px; }
.dxf { font: 700 7px Roboto, sans-serif; }
.search { display: flex; align-items: center; height: 30px; margin-left: 11px; padding: 0 8px 0 10px; border-radius: 3px; background: #ededed; color: #444; white-space: pre; }
kbd { height: 18px; padding: 0 3px; border: 1px solid #bbb; border-bottom-width: 2px; border-radius: 2px; font: 12px/15px Roboto, sans-serif; color: #555; }
kbd + kbd { padding: 0 4px; }

/* Feature panel */
.stage { flex: 1; min-height: 0; display: flex; }
.features { flex: none; width: 206px; border: solid #ccc; border-width: 1px 1px 1px 0; font-size: 13px; }
.head { display: flex; align-items: center; height: 32px; padding: 0 21px 0 5px; }
.head h2 { flex: 1; font-size: 13px; font-weight: 500; }
.head button + button { margin-left: 12px; }
.filter { display: flex; align-items: center; gap: 12px; height: 30px; padding: 0 8px 0 11px; }
.filter input { flex: 1; min-width: 0; height: 30px; padding: 0 5px; border: 1px solid #bbb; border-radius: 3px; font-style: italic; background: #fff; box-shadow: inset 0 1px 1px #ddd; }
.filter input::placeholder { color: #888; }
.tree { display: flex; height: 465px; margin-right: 5px; border-bottom: 1px solid #ccc; }
.tree > ul { flex: 1; }
.features li { display: flex; align-items: center; gap: 5px; height: 24px; margin-bottom: 2px; padding-left: 5px; }
.features li svg { width: 16px; height: 16px; }
.features li.group { gap: 6px; padding-left: 3px; }
.features li.group svg { width: 14px; height: 14px; }
.tree li.first { height: 21px; padding-bottom: 2px; }
.features li.nest { display: block; height: auto; margin: 0; padding: 0 0 0 10px; position: relative; }
.nest::before { content: ""; position: absolute; left: 10px; top: 0; bottom: 0; border-left: 1px solid #bbb; }
.nest::after { content: ""; position: absolute; left: 5px; bottom: 0; width: 10px; border-top: 1px solid #bbb; }
.features .nest li { padding-left: 15px; }
.features .nest .part { padding-left: 13px; }
.features li.off { color: #999; }
.dim svg { opacity: .5; }
.features li.current { background: #b0ddf4; font-weight: 700; }
.features li.rollback { height: 7px; margin: 10px 5px 0; background: #c1c1c1; }
.scroll { width: 17px; display: flex; flex-direction: column; align-items: center; background: #f0f0f0; padding: 7px 0; }
.scroll i { flex: 1; width: 13px; margin: 10px 0 6px; background: #c1c1c1; }
.parts { padding-top: 1px; }

/* Canvas */
.canvas { flex: 1; min-width: 0; position: relative; }
.model { display: block; width: 100%; height: 100%; }
.dims { font: 17px Roboto, sans-serif; fill: #333; }
.plane { font: 700 20px Roboto, sans-serif; fill: #8fc4e4; }
.dialog { position: absolute; left: 0; top: 3px; width: 219px; height: 140px; background: #fff; box-shadow: 0 3px 8px #999; font-size: 13px; color: #777; }
.dialog header { display: flex; height: 28px; border-bottom: 1px solid #ccc; }
.dialog h2 { flex: 1; padding-left: 5px; font-size: 14px; line-height: 28px; font-weight: 500; color: #333; }
.ok { width: 28px; height: 28px; background: #009400; display: grid; place-items: center; }
.no { width: 28px; }
.pick { display: flex; align-items: flex-start; gap: 4px; padding: 6px 6px 0 2px; }
.pick > button { margin-top: 3px; }
.field { flex: 1; min-width: 0; height: 44px; padding: 3px 5px 0; border: 1px solid #ccc; border-radius: 2px; }
.field label { display: block; font-size: 11px; line-height: 16px; color: #666; }
.field div { display: flex; align-items: center; padding-right: 6px; }
.field input { flex: 1; min-width: 0; height: 22px; padding: 0 1px; border: 0; font-size: 13px; color: #333; }
.check { display: flex; align-items: center; gap: 4px; height: 27px; font-size: 13px; }
.pick + .check { margin-top: 5px; }
.check input { appearance: none; width: 12px; height: 12px; margin: 0 0 0 3px; border: 1px solid #bbb; border-radius: 2px; }
.check input:checked { border: 0; background: #1651b0; display: grid; place-items: center; }
.check input:checked::after { content: ""; width: 4px; height: 8px; border: solid #fff; border-width: 0 2px 2px 0; transform: rotate(40deg); }
.lastrow { display: flex; justify-content: space-between; align-items: center; padding-right: 5px; }
.lastrow > button { margin-top: 10px; }
.fly { position: absolute; left: -1px; top: 454px; width: 33px; height: 34px; display: grid; place-items: center; background: #fff; border: 1px solid #ccc; border-left-color: #fff; }
.cube { position: absolute; right: 12px; top: 14px; font: 14px Roboto, sans-serif; text-anchor: middle; }
.face { fill: #222; }
.ay { fill: #28a428; font-size: 13px; }
.ax { fill: #e03030; font-size: 13px; }
.dock { position: absolute; right: 0; top: 404px; border: 1px solid #ccc; border-right: 0; }
.dock button { display: grid; place-items: center; width: 31px; height: 33px; padding-bottom: 2px; background: #fff; }
.dock button + button { border-top: 1px solid #ccc; }
.var { font: italic 700 18px "Liberation Serif", serif; fill: #333; text-anchor: middle; }
.measure { position: absolute; right: 12px; bottom: 7px; display: flex; gap: 18px; }

/* Document tabs */
.tabs { display: flex; flex: none; height: 30px; background: #d0d0d0; }
.plus { width: 33px; margin-right: 6px; }
.tab { display: flex; align-items: center; gap: 4px; width: 200px; height: 28px; margin-right: 2px; padding: 0 11px 2px; border-radius: 0 0 4px 4px; background: #e8e8e8; color: #777; box-shadow: 0 1px 1px #bbb; }
.tab.active { padding-bottom: 0; background: #fff; color: #444; border-bottom: 2px solid #1651b0; }
```
